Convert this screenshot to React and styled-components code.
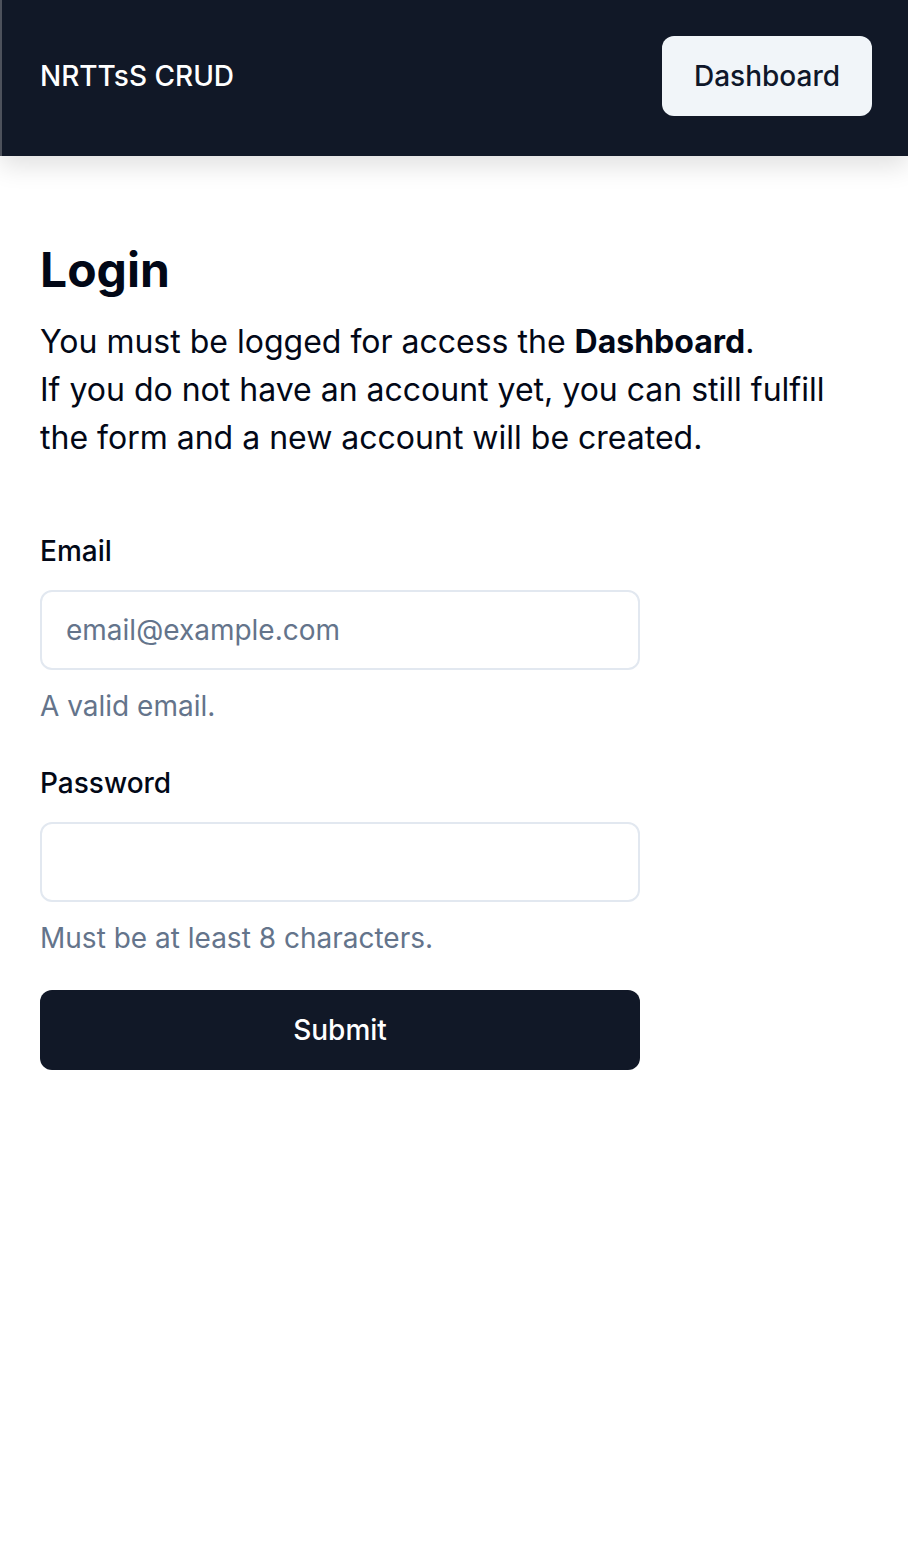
import styled, { createGlobalStyle } from 'styled-components';

const GlobalStyle = createGlobalStyle`
  * {
    box-sizing: border-box;
  }

  body {
    margin: 0;
    background: #ffffff;
    font-family: Inter, "Noto Sans", "Liberation Sans", sans-serif;
    color: #020817;
  }
`;

const App = () => {
  return (
    <>
      <GlobalStyle />
      <Header>
        <Brand>NRTTsS CRUD</Brand>
        <NavButton type="button">Dashboard</NavButton>
      </Header>

      <Main>
        <Title>Login</Title>
        <Intro>
          You must be logged for access the <strong>Dashboard</strong>.
          <br />
          If you do not have an account yet, you can still fulfill the form and
          a new account will be created.
        </Intro>

        <Form onSubmit={(e) => e.preventDefault()}>
          <Field>
            <Label htmlFor="email">Email</Label>
            <Input id="email" type="email" placeholder="email@example.com" />
            <Hint>A valid email.</Hint>
          </Field>

          <Field>
            <Label htmlFor="password">Password</Label>
            <Input id="password" type="password" />
            <Hint>Must be at least 8 characters.</Hint>
          </Field>

          <SubmitButton type="submit">Submit</SubmitButton>
        </Form>
      </Main>
    </>
  );
};

const Header = styled.header`
  display: flex;
  justify-content: space-between;
  align-items: center;
  height: 156px;
  padding: 0 36px 4px 38px;
  background: #111827;
  border-left: 2px solid #4d515b;
  box-shadow: 0 10px 24px rgba(0, 0, 0, 0.12);
`;

const Brand = styled.span`
  font-size: 28px;
  font-weight: 500;
  color: #ffffff;
`;

const NavButton = styled.button`
  width: 210px;
  height: 80px;
  border: none;
  border-radius: 12px;
  background: #f1f5f9;
  color: #0f172a;
  font-family: inherit;
  font-size: 28px;
  font-weight: 500;
  cursor: pointer;
`;

const Main = styled.main`
  padding: 90px 40px 40px;
`;

const Title = styled.h1`
  margin: 0;
  font-size: 48px;
  line-height: 48px;
  font-weight: 700;
  color: #020817;
`;

const Intro = styled.p`
  margin: 24px 0 0;
  max-width: 820px;
  font-size: 32px;
  line-height: 48px;
  color: #020817;

  strong {
    font-weight: 700;
  }
`;

const Form = styled.form`
  display: flex;
  flex-direction: column;
  width: 600px;
  margin-top: 75px;
`;

const Field = styled.div`
  display: flex;
  flex-direction: column;
  margin-bottom: 43px;

  &:nth-of-type(2) {
    margin-bottom: 32px;
  }
`;

const Label = styled.label`
  font-size: 28px;
  line-height: 28px;
  font-weight: 500;
  color: #020817;
  margin-bottom: 25px;
`;

const Input = styled.input`
  height: 80px;
  padding: 0 24px;
  border: 2px solid #e2e8f0;
  border-radius: 12px;
  background: #ffffff;
  font-family: inherit;
  font-size: 28px;
  color: #020817;
  outline: none;

  &::placeholder {
    color: #64748b;
  }
`;

const Hint = styled.p`
  margin: 16px 0 0;
  font-size: 28px;
  line-height: 40px;
  color: #64748b;
`;

const SubmitButton = styled.button`
  height: 80px;
  border: none;
  border-radius: 12px;
  background: #111827;
  color: #ffffff;
  font-family: inherit;
  font-size: 28px;
  font-weight: 500;
  cursor: pointer;
`;

export default App;
